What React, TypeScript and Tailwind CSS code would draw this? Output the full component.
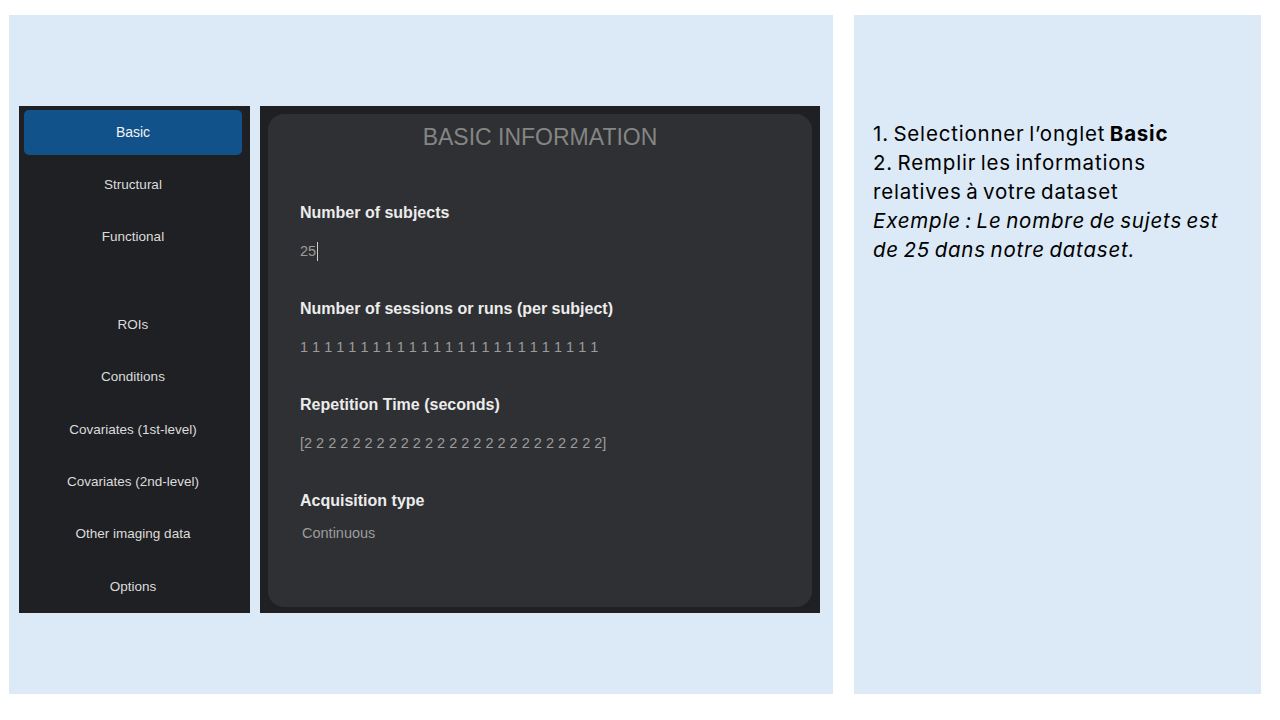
const navItems = [
  { label: 'Structural', gapTop: false },
  { label: 'Functional', gapTop: false },
  { label: 'ROIs', gapTop: true },
  { label: 'Conditions', gapTop: false },
  { label: 'Covariates (1st-level)', gapTop: false },
  { label: 'Covariates (2nd-level)', gapTop: false },
  { label: 'Other imaging data', gapTop: false },
  { label: 'Options', gapTop: false },
]

const fields = [
  { label: 'Number of subjects', value: '25', cursor: true },
  { label: 'Number of sessions or runs (per subject)', value: '1 1 1 1 1 1 1 1 1 1 1 1 1 1 1 1 1 1 1 1 1 1 1 1 1', cursor: false },
  { label: 'Repetition Time (seconds)', value: '[2 2 2 2 2 2 2 2 2 2 2 2 2 2 2 2 2 2 2 2 2 2 2 2 2]', cursor: false },
]

function Sidebar() {
  return (
    <div className="w-[231px] bg-[#1f2023] pl-[5px] pr-[8px] pt-[4px] flex flex-col items-stretch">
      <div className="h-[45px] rounded-[5px] bg-[#12528b] flex items-center justify-center text-[14px] text-[#f2f2f2]">
        Basic
      </div>
      <div className="mt-[4px] flex flex-col">
        {navItems.map(item => (
          <div
            key={item.label}
            className={`h-[52.4px] flex items-center justify-center text-[13.5px] text-[#dcdcdc] ${item.gapTop ? 'mt-[35px]' : ''}`}
          >
            {item.label}
          </div>
        ))}
      </div>
    </div>
  )
}

function BasicInfo() {
  return (
    <div className="w-[560px] bg-[#1f2023] p-[8px] pb-[6px] flex">
      <div className="flex-1 rounded-[16px] bg-[#2f3033] pt-[8px] pl-[32px]">
        <h1 className="text-center text-[23px] text-[#858585] pr-[32px] leading-[30px]">BASIC INFORMATION</h1>
        <div className="mt-[51px] flex flex-col">
          {fields.map(f => (
            <div key={f.label} className="h-[96px]">
              <div className="text-[16px] font-bold text-[#ececec] leading-[20px]">{f.label}</div>
              <div className="mt-[18px] text-[14.5px] text-[#9c9c9c] leading-[20px] flex items-center">
                {f.value}
                {f.cursor && <span className="inline-block w-px h-[19px] bg-[#cfcfcf] ml-px" />}
              </div>
            </div>
          ))}
          <div>
            <div className="text-[16px] font-bold text-[#ececec] leading-[20px]">Acquisition type</div>
            <div className="mt-[12px] ml-[2px] text-[14.5px] text-[#9c9c9c] leading-[20px]">Continuous</div>
          </div>
        </div>
      </div>
    </div>
  )
}

export default function App() {
  return (
    <div className="w-[1280px] h-[720px] bg-white flex pt-[15px] font-['Liberation_Sans',Arial,sans-serif]">
      <div className="ml-[9px] w-[824px] h-[679px] bg-[#dce9f6] pt-[91px] pl-[10px] flex gap-[10px] items-start">
        <div className="flex h-[507px] gap-[10px]">
          <Sidebar />
          <BasicInfo />
        </div>
      </div>
      <div className="ml-[21px] w-[407px] h-[679px] bg-[#dce9f6] pl-[19px] pr-[26px] pt-[104px] text-[20.5px] leading-[29px] tracking-[0.8px] [word-spacing:-2px] text-black font-['Inter','Noto_Sans',sans-serif]">
        <p>1. Selectionner l’onglet <b>Basic</b></p>
        <p>2. Remplir les informations relatives à votre dataset</p>
        <p className="italic">Exemple : Le nombre de sujets est de 25 dans notre dataset.</p>
      </div>
    </div>
  )
}
